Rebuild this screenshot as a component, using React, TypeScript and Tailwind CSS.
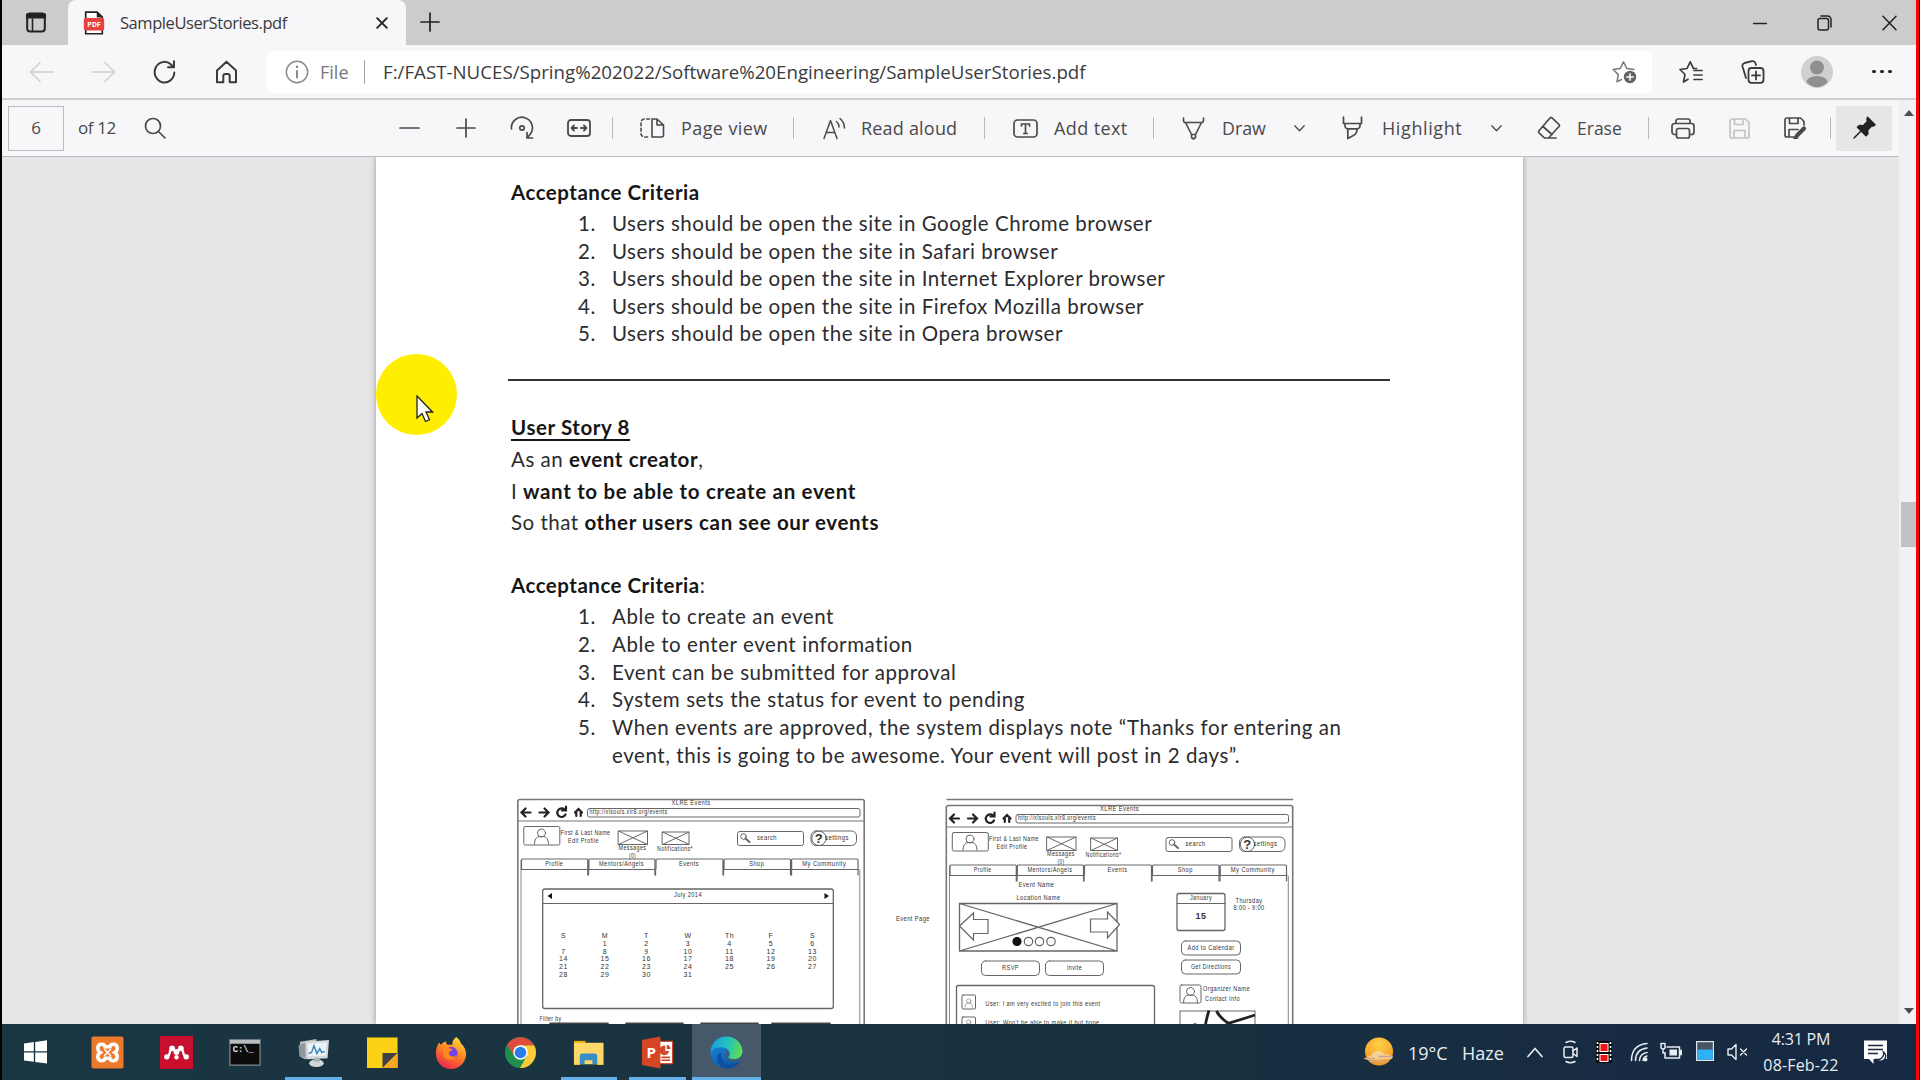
import type { ReactNode } from "react";

/* ---------- shared helpers ---------- */

function Ico({ w, h, className = "", sw = 1.6, children }: { w: number; h: number; className?: string; sw?: number; children: ReactNode }) {
  return (
    <svg
      width={w}
      height={h}
      viewBox={`0 0 ${w} ${h}`}
      className={`shrink-0 ${className}`}
      fill="none"
      stroke="currentColor"
      strokeWidth={sw}
      strokeLinecap="round"
      strokeLinejoin="round"
    >
      {children}
    </svg>
  );
}

function Sep({ className = "" }: { className?: string }) {
  return <div className={`h-[22px] w-px shrink-0 bg-[#b9b8bb] ${className}`} />;
}

/* ---------- browser chrome ---------- */

function TabBar() {
  return (
    <div className="flex h-[45px] shrink-0 bg-[#cccccc]">
      <div className="flex w-[66px] items-center rounded-br-md pl-[24px]">
        <Ico w={20} h={21} sw={2} className="text-[#222]">
          <rect x="1.2" y="1.5" width="17.6" height="18" rx="3" />
          <path d="M1.5 4h17" strokeWidth="5" />
          <path d="M6.5 7v12" strokeWidth="1.6" />
        </Ico>
      </div>
      <div className="flex w-[338px] items-center rounded-t-lg bg-[#f7f6f9] pl-[15px]">
        <svg width="22" height="24" viewBox="0 0 22 26" className="shrink-0">
          <path d="M2 1.2h12.5L20 6.5V24.6H2z" fill="#fff" stroke="#222" strokeWidth="1.8" />
          <path d="M14 1v6h6z" fill="#222" />
          <rect x="0" y="7.5" width="22" height="13.5" rx="2" fill="#e8403f" />
          <text x="11" y="17.3" textAnchor="middle" fontSize="7.6" fontWeight="700" fill="#fff" fontFamily="Open Sans, sans-serif">PDF</text>
        </svg>
        <span className="ml-[15px] w-[256px] text-[16.5px] leading-6 tracking-[-0.43px] whitespace-nowrap text-[#3a3a3c]">SampleUserStories.pdf</span>
        <Ico w={12} h={12} sw={1.9} className="text-[#222]">
          <path d="M1.2 1.2l9.6 9.6M10.8 1.2l-9.6 9.6" />
        </Ico>
      </div>
      <div className="flex items-center pl-[14px]">
        <Ico w={20} h={20} sw={1.7} className="-mt-[2px] text-[#222]">
          <path d="M10 1v18M1 10h18" />
        </Ico>
      </div>
      <div className="ml-auto flex items-center pr-[19px] text-[#222]">
        <Ico w={14} h={14} sw={1.6} className="mr-[50px]">
          <path d="M0.5 7.5h13" />
        </Ico>
        <Ico w={15} h={16} sw={1.5} className="mr-[50px]">
          <rect x="1" y="3.6" width="10.5" height="11.4" rx="2" />
          <path d="M4 1h6.5a3.5 3.5 0 0 1 3.5 3.5V12" />
        </Ico>
        <Ico w={15} h={16} sw={1.5}>
          <path d="M1 1.2l13 13.6M14 1.2L1 14.8" />
        </Ico>
      </div>
    </div>
  );
}

function AddressRow() {
  return (
    <div className="flex h-[53px] shrink-0 items-center bg-[#f7f6f9] pl-[27px] text-[#3b3b3d]">
      <Ico w={25} h={22} sw={1.5} className="text-[#d0cfd2]">
        <path d="M24 11H1.5M11 1.5L1.5 11l9.5 9.5" />
      </Ico>
      <Ico w={25} h={22} sw={1.5} className="ml-[37px] text-[#d0cfd2]">
        <path d="M1 11h22.5M14 1.5l9.500 9.500-9.500 9.500" />
      </Ico>
      <Ico w={23} h={24} sw={2} className="ml-[37px]">
        <path d="M21.300 12.500a9.800 10.300 0 1 1-3.600-8.300l3 3M21 1.300v6h-6" />
      </Ico>
      <Ico w={23} h={24} sw={2} className="ml-[39px]">
        <path d="M2 10.500L11.500 1.800 21 10.500V22.300H14.700V16a2 2 0 0 0-2-2h-2.400a2 2 0 0 0-2 2v6.300H2z" />
      </Ico>
      <div className="ml-[28px] flex h-[42px] w-[1386px] items-center rounded-md bg-white pl-[19px]">
        <Ico w={24} h={24} sw={1.5} className="text-[#8a898c]">
          <circle cx="12" cy="12" r="10.700" />
          <path d="M12 11v6.500" strokeWidth="2" />
          <path d="M12 6.800v.3" strokeWidth="2.400" />
        </Ico>
        <span className="ml-[11px] w-[44px] text-[18px] leading-6 text-[#77767a]">File</span>
        <div className="h-[24px] w-px bg-[#a5a4a8]" />
        <span className="ml-[18px] text-[18.700px] leading-6 tracking-[0.010px] whitespace-nowrap text-[#3b3b3d]">F:/FAST-NUCES/Spring%202022/Software%20Engineering/SampleUserStories.pdf</span>
        <Ico w={25} h={24} sw={1.500} className="mr-[15px] ml-auto text-[#77767a]">
          <path d="M9.500 19.500L5 21.800l1.300-7.200L1.200 9.500l7-1L11.500 1.800l3.300 6.700 7.200 1" />
          <circle cx="18" cy="17" r="6.200" fill="#626165" stroke="none" />
          <path d="M18 13.800v6.400M14.800 17h6.400" stroke="#fff" strokeWidth="1.500" />
        </Ico>
      </div>
      <Ico w={24} h={24} sw={1.700} className="ml-[27px]">
        <path d="M9 19.300L4.500 22l1.500-7.500-5-5 7-1L11.200 1.800l3.300 6.700h3M15 10.500h8M15 15h8M15 19.500h8" />
      </Ico>
      <Ico w={24} h={24} sw={1.800} className="ml-[38px]">
        <path d="M5 18L1.500 6.500A3 3 0 0 1 3.500 3L11 1.200a3 3 0 0 1 3.500 2L15 5" />
        <rect x="7.500" y="8" width="15" height="14.800" rx="3" />
        <path d="M15 11.500v8M11 15.400h8" />
      </Ico>
      <svg width="32" height="32" viewBox="0 0 32 32" className="ml-[36px] shrink-0">
        <circle cx="16" cy="16" r="16" fill="#d2d0ce" />
        <ellipse cx="16" cy="11.500" rx="7" ry="7" fill="#918f8d" />
        <path d="M5.500 26a10.500 6 0 0 1 21 0A14 14 0 0 1 16 31.200 14 14 0 0 1 5.500 26z" fill="#918f8d" />
      </svg>
      <div className="ml-[39px] flex gap-[4.500px]">
        <div className="size-[3.500px] rounded-full bg-[#222]" />
        <div className="size-[3.500px] rounded-full bg-[#222]" />
        <div className="size-[3.500px] rounded-full bg-[#222]" />
      </div>
    </div>
  );
}

function Chevron({ className = "" }: { className?: string }) {
  return (
    <Ico w={11} h={7} sw={1.300} className={className}>
      <path d="M0.800 0.800l4.700 5 4.700-5" />
    </Ico>
  );
}

function PdfToolbar() {
  return (
    <div className="flex h-[57px] shrink-0 items-center border-b border-[#bdbcc0] bg-[#f7f6f9] pl-[6px] text-[18px] leading-6 whitespace-nowrap text-[#4a494c]">
      <div className="flex h-[45px] w-[56px] items-center justify-center border border-[#bdbcc0] text-[17px]">6</div>
      <span className="ml-[14px] w-[66px] text-[17px] tracking-[-0.400px]">of 12</span>
      <Ico w={22} h={22} sw={1.700} className="-mt-px">
        <circle cx="9" cy="9" r="7.500" />
        <path d="M14.500 14.500l6.500 6.500" />
      </Ico>
      <Ico w={21} h={20} sw={1.700} className="ml-[233px]">
        <path d="M1 10h19" />
      </Ico>
      <Ico w={20} h={20} sw={1.700} className="ml-[36px]">
        <path d="M10 1v18M1 10h18" />
      </Ico>
      <Ico w={25} h={24} sw={1.700} className="ml-[34px]">
        <path d="M1.500 13A10.500 10.500 0 1 1 20 18.500l-2.500 3M17 16.500v5.500h5.500" />
        <circle cx="12" cy="12" r="2.200" />
      </Ico>
      <Ico w={24} h={18} sw={1.800} className="ml-[32px]">
        <rect x="1" y="1" width="22" height="16" rx="3" />
        <path d="M5 9h5M19 9h-5M7 6.500L4.500 9 7 11.500M17 6.500L19.500 9 17 11.500" />
      </Ico>
      <Sep className="ml-[21px]" />
      <Ico w={25} h={20} sw={1.600} className="ml-[27px]">
        <path d="M9.500 1H4.500A3.500 3.500 0 0 0 1 4.500v11A3.500 3.500 0 0 0 4.500 19h5" strokeDasharray="2.800 2.600" />
        <path d="M12 1h5l6.500 6v10a2 2 0 0 1-2 2H12zM17 1v6h6.500" />
      </Ico>
      <span className="ml-[16px] w-[87px] tracking-[0.400px]">Page view</span>
      <Sep className="ml-[25px]" />
      <Ico w={23} h={23} sw={1.500} className="ml-[29px]">
        <path d="M1 21.500L7.500 3.500 14 21.500M3.300 15.500h8.500" />
        <path d="M13.500 4.500q2.500 2 2.500 5.500M17 1.500q4.500 4 4.500 9.500" />
      </Ico>
      <span className="ml-[15px] w-[97px] tracking-[0.200px]">Read aloud</span>
      <Sep className="ml-[26px]" />
      <Ico w={25} h={19} sw={1.700} className="ml-[28px]">
        <rect x="1" y="1" width="23" height="17" rx="3.500" />
        <path d="M8.500 7V5h8v2M12.500 5v9.500M10.800 14.500h3.400" />
      </Ico>
      <span className="ml-[16px] w-[74px] tracking-[0.400px]">Add text</span>
      <Sep className="ml-[25px]" />
      <Ico w={23} h={23} sw={1.600} className="ml-[28px]">
        <path d="M1.500 1v3l1 1.500h18l1-1.500V1M3.500 5.500L9.500 17.500v3l2 1.500 2-1.500v-3L19.500 5.500M9.500 17.500h4" />
      </Ico>
      <span className="ml-[17px] w-[72px] text-[17.800px]">Draw</span>
      <Chevron className="mt-px" />
      <Ico w={21} h={24} sw={1.700} className="ml-[37px]">
        <path d="M1.500 1v6.500h18V1M3 7.500v2.500a3 3 0 0 0 2 2.800h11a3 3 0 0 0 2-2.800V7.500M5.800 13v9.500l6-3.200q3.200-1.800 3.200-6.300" />
      </Ico>
      <span className="ml-[19px] w-[109px] tracking-[0.600px]">Highlight</span>
      <Chevron className="mt-px" />
      <Ico w={24} h={24} sw={1.700} className="ml-[35px]">
        <path d="M14.800 1.700L22 8.500a1.500 1.500 0 0 1 0 2L11.500 22H7.500L2 16.800a1.500 1.500 0 0 1 0-2L13 2a1.300 1.300 0 0 1 1.800-.3zM6 10.500l9 8M7.500 22h11.500" />
      </Ico>
      <span className="ml-[16px] w-[52px] text-[17.500px]">Erase</span>
      <Sep className="ml-[19px]" />
      <Ico w={24} h={21} sw={1.700} className="ml-[22px]">
        <path d="M5 5.500V3a2 2 0 0 1 2-2h10a2 2 0 0 1 2 2v2.500M5 16.500H3.500A2.500 2.500 0 0 1 1 14V8a2.500 2.500 0 0 1 2.500-2.500h17A2.500 2.500 0 0 1 23 8v6a2.500 2.500 0 0 1-2.500 2.500H19" />
        <rect x="5.500" y="10.500" width="13" height="9.500" rx="2" />
      </Ico>
      <Ico w={21} h={21} sw={1.700} className="ml-[34px] text-[#c4c3c6]">
        <path d="M1 3a2 2 0 0 1 2-2h13.500L20 4.500V18a2 2 0 0 1-2 2H3a2 2 0 0 1-2-2zM5.500 1v5.500H14V1M5 20v-7.500h11V20" />
      </Ico>
      <Ico w={23} h={22} sw={1.700} className="ml-[34px]">
        <path d="M10 20H3a2 2 0 0 1-2-2V3a2 2 0 0 1 2-2h13.500L20 4.500V8M5.500 1v5.500H14V1M5 20v-7.500h9" />
        <path d="M20 11.500l-7 7" strokeWidth="4.200" />
        <path d="M11.500 19l-1.500 2.500 3.500-.5z" fill="currentColor" />
      </Ico>
      <Sep className="ml-[23px]" />
      <div className="ml-[5px] flex h-[45px] w-[56px] items-center justify-center bg-[#e6e5e7] text-[#222]">
        <Ico w={23} h={23} sw={1.500} className="-mt-[2px]">
          <path d="M14.500 1.200l7.500 7.500-1.500 1.300-1.800-.2-4 4.200.1 4-1.800 1.800L4.500 11.300l1.800-1.800 4 .2 4-4.200-.3-2z" fill="currentColor" />
          <path d="M8.500 14.500L1 22" />
        </Ico>
      </div>
    </div>
  );
}

/* ---------- wireframe figure inside the document ---------- */

function T({ x, y, w, s = 7, b = false, start = false, children }: { x: number; y: number; w?: number; s?: number; b?: boolean; start?: boolean; children: string }) {
  return (
    <text
      x={x}
      y={y}
      fontSize={s}
      fontWeight={b ? 700 : 400}
      textAnchor={start ? "start" : "middle"}
      textLength={w}
      lengthAdjust="spacingAndGlyphs"
      fill="#333"
      stroke="none"
      fontFamily="Liberation Sans, Arial, sans-serif"
    >
      {children}
    </text>
  );
}

function Person({ x, y, s = 1 }: { x: number; y: number; s?: number }) {
  return (
    <g transform={`translate(${x} ${y}) scale(${s})`} strokeWidth={1}>
      <circle cx="0" cy="-3.500" r="4" />
      <path d="M-7 7.500q0-7 5-7.500h4q5 .5 5 7.500" />
    </g>
  );
}

function MockHeader() {
  const tabs = [521, 588.3, 655.5, 723.500, 791, 858.500];
  const names: [string, number][] = [["Profile", 18], ["Mentors/Angels", 45], ["Events", 20], ["Shop", 15], ["My Community", 44]];
  return (
    <g>
      <rect x="517.800" y="799.500" width="346.400" height="240" rx="2" stroke="#777" strokeWidth="1.600" />
      <path d="M521 860v180M859.800 870v160" stroke="#888" />
      <path d="M518 821h346" stroke="#777" strokeWidth="1.200" />
      <T x={691} y={805.3} w={39}>XLRE Events</T>
      <g stroke="#222" strokeWidth="2.200">
        <path d="M530.500 812.500h-9M525.500 808.500l-4 4 4 4M539.500 812.500h9M544.500 808.500l4 4-4 4" />
        <path d="M565.500 814.500a4.300 4.300 0 1 1-1-5M566 806.500v4h-4" />
        <path d="M575 812.500l3.500-3.500 3.500 3.500M576.300 812.500v3.500M580.700 812.500v3.500" />
      </g>
      <rect x="587.500" y="808.500" width="272.500" height="8.500" rx="2" />
      <T x={589.500} y={814} w={78} s={7} start>http://xlsouls.xlr8.org/events</T>
      <rect x="523.800" y="826.500" width="36" height="18.500" rx="1.500" />
      <Person x={541.500} y={836.500} />
      <T x={585.500} y={834.800} w={50}>First &amp; Last Name</T>
      <T x={583.500} y={842.500} w={31}>Edit Profile</T>
      <path d="M618.500 831h29v13.500h-29zl29 13.500M647.500 831l-29 13.500" />
      <T x={632.500} y={849.500} w={28}>Messages</T>
      <T x={632.500} y={857.500} w={7}>(0)</T>
      <path d="M662.500 832h26.500v12.500h-26.500zl26.500 12.500M689 832l-26.500 12.500" />
      <T x={675} y={851.300} w={36}>Notifications*</T>
      <rect x="737.500" y="831.500" width="66" height="14" rx="2" />
      <circle cx="743.500" cy="836.500" r="2.800" />
      <path d="M745.500 838.500l4 3.500" strokeWidth="2" />
      <T x={767} y={840} w={20}>search</T>
      <rect x="811" y="831" width="45.500" height="14.500" rx="5" />
      <circle cx="819" cy="838.300" r="7.200" />
      <T x={819} y={843} s={13} b>?</T>
      <T x={837} y={840} w={24}>settings</T>
      {names.map(([n, w], i) => (
        <g key={n}>
          <path d={`M${tabs[i] + 0.500} 869V860q0-1 1-1H${tabs[i + 1] - 1.500}q1 0 1 1v15`} strokeWidth="1.200" />
          {i !== 2 && <path d={`M${tabs[i]} 869.500H${tabs[i + 1]}`} />}
          <T x={(tabs[i] + tabs[i + 1]) / 2 - 0.500} y={866} w={w}>{n}</T>
        </g>
      ))}
      <path d="M655.500 869v6M588.500 861v14M723.500 861v14M791.500 861v14" strokeWidth="1.300" />
    </g>
  );
}

const calendarRows = [
  ["S", "M", "T", "W", "Th", "F", "S"],
  ["", "1", "2", "3", "4", "5", "6"],
  ["7", "8", "9", "10", "11", "12", "13"],
  ["14", "15", "16", "17", "18", "19", "20"],
  ["21", "22", "23", "24", "25", "26", "27"],
  ["28", "29", "30", "31", "", "", ""],
];

function Figure() {
  return (
    <svg viewBox="510 790 800 234" width="800" height="234" className="absolute bottom-0 left-[134px]" fill="none" stroke="#666" strokeWidth="1" strokeLinecap="round">
      <MockHeader />
      <rect x="542.700" y="889" width="290.600" height="119.500" rx="2" strokeWidth="1.300" />
      <path d="M543 903.500h290" />
      <path d="M552 893v6l-4.500-3zM824.500 893v6l4.500-3z" fill="#111" stroke="none" />
      <T x={688} y={897.300} w={28}>July 2014</T>
      {calendarRows.map((r, i) =>
        r.map((d, j) => d && <T key={`${i}-${j}`} x={563.500 + j * 41.500} y={938 + i * 7.800}>{d}</T>)
      )}
      <T x={550.500} y={1020.500} w={22}>Filter by</T>
      <path d="M550 1023.300h58M626 1023.300h57M701 1023.300h57M772 1023.300h58" strokeWidth="1.600" stroke="#444" />
      <T x={913} y={921} w={34}>Event Page</T>

      <path d="M947 799.500h345.500" stroke="#777" strokeWidth="1.500" />
      <g transform="translate(428.500 6)">
        <MockHeader />
      </g>
      <T x={1036.500} y={887.300} w={36}>Event Name</T>
      <T x={1038.500} y={899.500} w={44}>Location Name</T>
      <path d="M959.500 903.500h157.500v47.500H959.500zl157.500 47.500M1117 903.500L959.500 951" strokeWidth="1.300" />
      <g fill="#fff" strokeWidth="1.200">
        <path d="M959.500 926l14-13v6.500h14.500v14h-14.500v6.500zM1119.500 924.500l-12-12.500v7h-17v13h17v6z" />
        <circle cx="1017" cy="941.500" r="4" fill="#111" stroke="#111" />
        <circle cx="1028.500" cy="941.500" r="4.200" />
        <circle cx="1039.500" cy="941.500" r="4.200" />
        <circle cx="1051" cy="941.500" r="4.200" />
      </g>
      <rect x="981.500" y="961" width="58" height="14.500" rx="4" />
      <T x={1010.500} y={969.500} w={17}>RSVP</T>
      <rect x="1045.500" y="961" width="58" height="14.500" rx="4" />
      <T x={1074.500} y={969.500} w={15}>Invite</T>
      <rect x="956.500" y="985.500" width="198" height="60" rx="2" strokeWidth="1.300" />
      <rect x="962" y="995" width="13.500" height="14" rx="1" />
      <Person x={968.700} y={1003} s={0.550} />
      <T x={985.500} y={1006} w={115} start>User: I am very excited to join this event</T>
      <rect x="962" y="1017" width="13.500" height="14" rx="1" />
      <Person x={968.700} y={1024} s={0.550} />
      <T x={985.500} y={1024.500} w={114} start>User: Won&apos;t be able to make it but hope</T>
      <rect x="1177" y="893.500" width="48" height="37" rx="2" strokeWidth="1.300" />
      <path d="M1177 903.500h48" />
      <T x={1201} y={900} w={22}>January</T>
      <T x={1201} y={918.800} s={9} w={11} b>15</T>
      <T x={1249} y={902.500} w={27}>Thursday</T>
      <T x={1249} y={910} w={31}>8:00 - 9:00</T>
      <rect x="1181.500" y="941" width="59" height="14" rx="4" />
      <T x={1211} y={949.500} w={47}>Add to Calendar</T>
      <rect x="1181.500" y="960" width="59" height="14" rx="4" />
      <T x={1211} y={968.500} w={40}>Get Directions</T>
      <rect x="1180" y="985" width="21" height="18" rx="1.500" />
      <Person x={1190.500} y={995} />
      <T x={1226.500} y={991} w={47}>Organizer Name</T>
      <T x={1222.500} y={1001} w={35}>Contact Info</T>
      <rect x="1180" y="1011" width="75" height="30" />
      <path d="M1209 1010.500q-2 6-3.500 14M1216.500 1011q4 8 14 13.500M1226 1024q14-4 29-9" stroke="#222" strokeWidth="2.800" strokeLinecap="butt" />
      <circle cx="1195" cy="1026" r="2.500" />
    </svg>
  );
}

/* ---------- document ---------- */

function OrderedList({ items }: { items: ReactNode[] }) {
  return (
    <ol>
      {items.map((t, i) => (
        <li key={i} className="flex">
          <span className="w-[101px] pl-[67px]">{i + 1}.</span>
          <span>{t}</span>
        </li>
      ))}
    </ol>
  );
}

function Page() {
  return (
    <div className="relative h-full w-[1147px] bg-white pt-[22px] pl-[135px] font-[Lato,sans-serif] text-[20.500px] leading-[27.500px] tracking-[0.520px] whitespace-nowrap text-[#2c2c2e] shadow-[0_0_5px_1px_rgba(0,0,0,0.25)]">
      <h2 className="font-bold tracking-[0.500px] text-[#161616]">Acceptance Criteria</h2>
      <div className="pt-[3.500px]">
        <OrderedList
          items={[
            "Users should be open the site in Google Chrome browser",
            "Users should be open the site in Safari browser",
            "Users should be open the site in Internet Explorer browser",
            "Users should be open the site in Firefox Mozilla browser",
            "Users should be open the site in Opera browser",
          ]}
        />
      </div>
      <div className="mt-[31.500px] -ml-[3px] h-[1.500px] w-[882px] bg-[#333]" />
      <h2 className="mt-[33px] font-bold tracking-[0.600px] text-[#161616] underline decoration-2 underline-offset-4">User Story 8</h2>
      <div className="mt-[3px] leading-[31.600px] tracking-[0.500px]">
        <p>As an <b className="tracking-[0.600px] text-[#161616]">event creator</b>,</p>
        <p>I <b className="tracking-[0.680px] text-[#161616]">want to be able to create an event</b></p>
        <p>So that <b className="tracking-[0.640px] text-[#161616]">other users can see our events</b></p>
      </div>
      <h2 className="mt-[33px] tracking-[0.500px]"><b className="text-[#161616]">Acceptance Criteria</b>:</h2>
      <div className="pt-[4px] leading-[27.700px] tracking-[0.580px]">
        <OrderedList
          items={[
            "Able to create an event",
            "Able to enter event information",
            "Event can be submitted for approval",
            "System sets the status for event to pending",
            <>When events are approved, the system displays note “Thanks for entering an<br />event, this is going to be awesome. Your event will post in 2 days”.</>,
          ]}
        />
      </div>
      <Figure />
    </div>
  );
}

function Triangle({ up = false, className = "" }: { up?: boolean; className?: string }) {
  return (
    <svg width="10" height="6" viewBox="0 0 10 6" className={`shrink-0 ${className}`}>
      <path d={up ? "M0 6L5 0l5 6z" : "M0 0l5 6 5-6z"} fill="#4d4c50" />
    </svg>
  );
}

function Scrollbar() {
  return (
    <div className="flex w-[17px] flex-col items-center bg-[#f1f0f3]">
      <Triangle className="mt-[10px] ml-[3px]" up />
      <div className="mt-[386px] ml-[2px] h-[45px] w-[15px] bg-[#c1c0c2]" />
      <Triangle className="mt-auto mb-[10px] ml-[3px]" />
    </div>
  );
}

function Pointer() {
  return (
    <div className="absolute top-[354px] left-[376px] size-[81px] rounded-full bg-[#ffee00]">
      <svg width="18" height="28" viewBox="0 0 18 28" className="absolute top-[41px] left-[40px]">
        <path d="M1 1v22l5-4.500 3.500 8 4-1.800-3.500-7.700h6.500z" fill="#fff" stroke="#222" strokeWidth="1.300" />
      </svg>
    </div>
  );
}

/* ---------- taskbar ---------- */

function App32({ children }: { children: ReactNode }) {
  return (
    <svg width="33" height="33" viewBox="0 0 34 34">
      {children}
    </svg>
  );
}

const XamppIcon = (
  <App32>
    <rect x="0.500" y="0.500" width="33" height="33" rx="2" fill="#ec7a2c" />
    <path d="M11 8.500q3 0 3.500 2.500h5q.5-2.500 3.500-2.500 4 0 4 4 0 3-2.500 4.500 2.500 1.500 2.500 4.500 0 4-4 4-3 0-3.500-2.500h-5q-.5 2.500-3.500 2.500-4 0-4-4 0-3 2.500-4.500-2.500-1.500-2.500-4.500 0-4 4-4z" fill="none" stroke="#fff" strokeWidth="3.600" />
    <path d="M13.500 13.500l7 7M20.500 13.500l-7 7" stroke="#fff" strokeWidth="1.500" />
  </App32>
);

const MendeleyIcon = (
  <App32>
    <rect width="34" height="34" fill="#c8102e" />
    <g fill="#fff">
      <circle cx="12.500" cy="12.800" r="3" />
      <circle cx="21.500" cy="12.800" r="3" />
      <circle cx="17" cy="16.500" r="3" />
      <circle cx="7" cy="21.500" r="2.800" />
      <circle cx="27" cy="21.500" r="2.800" />
      <circle cx="17" cy="21.800" r="2.300" />
    </g>
    <path d="M7 21.500q3-1 3.500-7M27 21.500q-3-1-3.500-7" stroke="#fff" strokeWidth="2.400" fill="none" />
  </App32>
);

const TerminalIcon = (
  <App32>
    <rect x="2" y="4" width="31" height="26" fill="#0b0b0b" stroke="#8b8f93" strokeWidth="1.200" />
    <rect x="2" y="4" width="31" height="4" fill="#b7bcc0" />
    <text x="5" y="16.500" fontSize="9" fontWeight="700" fill="#e5e5e5" fontFamily="Liberation Mono, monospace">C:\_</text>
  </App32>
);

const MonitorIcon = (
  <App32>
    <path d="M3 6l17-3v17l-12 4-5-3z" fill="#b9bec3" />
    <path d="M1.500 9.500l7-2v15l-6-1.500z" fill="#8f969c" />
    <path d="M9 6l24-2-1.500 19L10 24z" fill="#d6d9dc" />
    <path d="M11 8l19.500-1.500-1.200 13.500L11.500 21z" fill="#eef5fa" />
    <path d="M12 18l3-1 2.500-7 3 8 3-5 2 4 3-1" fill="none" stroke="#3c87b5" strokeWidth="1.500" />
    <ellipse cx="20" cy="28" rx="7.500" ry="4" fill="#d3d6d9" />
    <rect x="17.500" y="22.500" width="6" height="4" fill="#a9aeb3" />
  </App32>
);

const StickyIcon = (
  <App32>
    <path d="M1 1.500h31.500v31.500H1z" fill="#fcd116" />
    <path d="M17 17.500h15.500L17 33z" fill="#3f4144" />
    <path d="M32.500 17.500V33H17z" fill="#f5a623" />
  </App32>
);

const FirefoxIcon = (
  <App32>
    <defs>
      <linearGradient id="ffx" x1="0.800" y1="0" x2="0.300" y2="1">
        <stop offset="0" stopColor="#ffe14a" />
        <stop offset="0.450" stopColor="#ff8a1e" />
        <stop offset="1" stopColor="#f0244f" />
      </linearGradient>
    </defs>
    <path d="M22 1q4 3 5 7 4.500 4 5 10a15.500 15.500 0 0 1-31 1Q.500 12 4.500 6.500q.5 2 1.500 2.500 3-3 5.500-3.500Q11 8 13 9h5q-1-4 4-8z" fill="url(#ffx)" />
    <circle cx="17" cy="17.500" r="6.300" fill="#7542e5" />
    <path d="M8 12q4-2 7 1 3 0 3 1.500l-3.500 2q-1 3.500 2.500 4.500 3 .5 5-1.500-2 5.500-7.500 5T8 18z" fill="#ff8a1e" />
  </App32>
);

const ChromeIcon = (
  <App32>
    <circle cx="17" cy="17" r="16" fill="#1f8f4d" />
    <path d="M17 9.500h14.100A16 16 0 0 1 16.500 33l7-12.500z" fill="#fbcb3a" />
    <path d="M3.200 9A16 16 0 0 1 30.900 9.500H17a7.500 7.500 0 0 0-7 10z" fill="#df4b3c" />
    <circle cx="17" cy="17" r="7.500" fill="#fff" />
    <circle cx="17" cy="17" r="6" fill="#2a7de9" />
  </App32>
);

const ExplorerIcon = (
  <App32>
    <path d="M2 5h12v4H2z" fill="#f0ab00" />
    <rect x="2" y="7" width="30.500" height="22" rx="1" fill="#ffd869" />
    <path d="M8 29v-8.500a2.500 2.500 0 0 1 2.500-2.500h13a2.500 2.500 0 0 1 2.500 2.500V29h-5v-4h-8v4z" fill="#3a8ec6" />
    <path d="M2 29h6M26 29h6.500" stroke="#f5c542" strokeWidth="1.500" />
  </App32>
);

const PowerPointIcon = (
  <App32>
    <rect x="16" y="5.500" width="16.500" height="23" fill="#fff" stroke="#d24726" strokeWidth="1.200" />
    <path d="M25 10a5 5 0 1 0 4 5.500h-4z" fill="#d24726" />
    <path d="M26.500 9a5 5 0 0 1 4 4.500h-4z" fill="#d24726" />
    <path d="M21 22h9M21 25h9" stroke="#d24726" strokeWidth="1.600" />
    <path d="M1 4l19-3.500v33L1 30z" fill="#d64526" />
    <text x="10.500" y="22.500" textAnchor="middle" fontSize="15.500" fontWeight="700" fill="#fff" fontFamily="Open Sans, sans-serif">P</text>
  </App32>
);

const EdgeIcon = (
  <App32>
    <defs>
      <linearGradient id="edgeTop" x1="0" y1="0.300" x2="1" y2="0.500">
        <stop offset="0" stopColor="#1b9de2" />
        <stop offset="0.550" stopColor="#25c4b8" />
        <stop offset="1" stopColor="#5fdc4e" />
      </linearGradient>
      <linearGradient id="edgeLow" x1="0" y1="0" x2="0.600" y2="1">
        <stop offset="0" stopColor="#1c8ee0" />
        <stop offset="1" stopColor="#0b57ad" />
      </linearGradient>
    </defs>
    <circle cx="17" cy="17" r="16.500" fill="url(#edgeLow)" />
    <path d="M.6 16A16.500 16.500 0 0 1 33.500 15.500q0 7.500-8 8.500-6.500.3-7-2 2.500-2 1.500-5.500-2-5-8.500-5-7 0-10.900 4.500z" fill="url(#edgeTop)" />
    <path d="M11.500 17q-1 8 5.500 11.500 6 2.500 14-2-5 7-14 7Q8 32 7.500 23.500 7.500 19 11.500 17z" fill="#0c4f9e" />
    <path d="M17 14.500q3.500 2 1.500 7.500 2 2.300 7 2 5-.3 7-3-.6 2.800-1.700 4.500-6.800 2.500-11.800-.5-4.500-4-2-10.500z" fill="#44596a" />
  </App32>
);

type TaskState = "idle" | "open" | "active";

const taskItems: { name: string; icon: ReactNode; state: TaskState }[] = [
  { name: "xampp", icon: XamppIcon, state: "idle" },
  { name: "mendeley", icon: MendeleyIcon, state: "idle" },
  { name: "terminal", icon: TerminalIcon, state: "idle" },
  { name: "monitor", icon: MonitorIcon, state: "open" },
  { name: "notes", icon: StickyIcon, state: "idle" },
  { name: "firefox", icon: FirefoxIcon, state: "idle" },
  { name: "chrome", icon: ChromeIcon, state: "idle" },
  { name: "explorer", icon: ExplorerIcon, state: "open" },
  { name: "powerpoint", icon: PowerPointIcon, state: "open" },
  { name: "edge", icon: EdgeIcon, state: "active" },
];

function TaskButton({ icon, state }: { icon: ReactNode; state: TaskState }) {
  return (
    <div className={`relative flex w-[68.800px] items-center justify-center ${state === "active" ? "bg-[#45596a]" : ""}`}>
      {icon}
      {state === "open" && <div className="absolute inset-x-[6px] bottom-0 h-[3px] bg-[#64b1ea]" />}
      {state === "active" && <div className="absolute inset-x-0 bottom-0 h-[3px] bg-[#64b1ea]" />}
    </div>
  );
}

function Tray() {
  return (
    <div className="ml-auto flex items-center pr-[28px] text-[#e8edf2]">
      <svg width="30" height="32" viewBox="0 0 30 32" className="shrink-0">
        <defs>
          <radialGradient id="sun" cx="0.500" cy="0.250" r="0.800">
            <stop offset="0" stopColor="#ffd24a" />
            <stop offset="1" stopColor="#f2901c" />
          </radialGradient>
        </defs>
        <circle cx="15" cy="15.500" r="14" fill="url(#sun)" />
        <path d="M2 24q1-4 5-4 2-5 7-5 4.500 0 6 3.500 3-1 5 .5 3.500 1 3.500 4z" fill="#f4d9b5" opacity="0.750" />
        <path d="M0 22.500h11M14 20.500h15M6 25.500h18" stroke="#c9a98a" strokeWidth="1.500" />
      </svg>
      <span className="mt-[2px] ml-[14px] w-[54px] text-[18px]">19°C</span>
      <span className="mt-[2px] w-[65px] text-[18px]">Haze</span>
      <Ico w={16} h={11} sw={1.700}>
        <path d="M1 9.500L8 1.500l7 8" />
      </Ico>
      <Ico w={15} h={24} sw={1.500} className="ml-[20px]">
        <rect x="1" y="7" width="9" height="10.500" rx="1.500" />
        <path d="M10 11l4-3v8.500l-4-3M3 2.500q4.500-2.500 9 0M3 21.500q4.500 2.500 9 0" />
      </Ico>
      <svg width="16" height="22" viewBox="0 0 16 22" className="ml-[18px]">
        <rect width="16" height="22" fill="#0a0a0a" />
        <path d="M1.500 1v20M14.500 1v20" stroke="#fff" strokeWidth="1.600" strokeDasharray="2 2" />
        <rect x="4" y="2.500" width="8" height="8" fill="#f01414" stroke="#fff" strokeWidth="1" />
        <rect x="4" y="13.500" width="8" height="7" fill="#f01414" stroke="#fff" strokeWidth="1" />
      </svg>
      <Ico w={18} h={20} sw={1.500} className="ml-[18px]">
        <path d="M1.500 18.500Q1.500 3 17 1.500M5.500 18.500Q5.500 7.500 17 6M9.500 18.500q.5-7 7.500-8M13 18.500q.5-3.500 4-4.500" />
        <circle cx="15.500" cy="17.500" r="1.300" fill="currentColor" />
      </Ico>
      <Ico w={24} h={18} sw={1.500} className="-mt-[2px] ml-[11px]">
        <path d="M8 5h12.500v11H6v-5" />
        <path d="M22 8.500v4" strokeWidth="2" />
        <rect x="10.500" y="7.500" width="7.500" height="6" fill="currentColor" stroke="none" />
        <path d="M2 1.500v3.500q0 2 2 2t2-2V1.500zM4 7v4h2" />
      </Ico>
      <svg width="18" height="20" viewBox="0 0 18 20" className="-mt-[3px] ml-[13px]">
        <rect x="0.600" y="0.600" width="16.800" height="18.800" fill="#4a5362" stroke="#dfe5ea" strokeWidth="1.200" />
        <rect x="1.200" y="8.500" width="15.600" height="10.300" fill="#31b1f5" />
      </svg>
      <Ico w={21} h={18} sw={1.400} className="-mt-px ml-[13px]">
        <path d="M1 6h3.500L9 1.500v15L4.500 12H1zM13.500 6l6 6M19.500 6l-6 6" />
      </Ico>
      <div className="-mt-px ml-[15px] flex w-[76px] flex-col items-center text-[16px] leading-[26px] whitespace-nowrap">
        <span className="tracking-[-0.200px]">4:31 PM</span>
        <span className="tracking-[0.150px]">08-Feb-22</span>
      </div>
      <svg width="24" height="25" viewBox="0 0 24 25" className="mt-px ml-[25px]">
        <path d="M0 0.500h23v18.500H9.500V24L5 19H0z" fill="#fff" />
        <path d="M4 5.500h15M4 9.500h15M4 13.500h10" stroke="#172b45" strokeWidth="1.600" />
        <path d="M19.500 12a5 5 0 1 1-6.500 7.500 6 6 0 0 0 6.500-7.500z" fill="#fff" stroke="#172b45" strokeWidth="1.400" />
      </svg>
    </div>
  );
}

function Taskbar() {
  return (
    <div className="flex h-[56px] shrink-0 bg-linear-to-r from-[#1a3642] via-[#19323f] to-[#162843]">
      <div className="flex w-[71px] items-center pl-[22px]">
        <svg width="23" height="24" viewBox="0 0 23 24">
          <path d="M0 3.500l9.800-1.400v9.100H0zM11.200 1.900L23 .3v10.900H11.200zM0 12.600h9.800v9.200L0 20.400zM11.200 12.600H23v11L11.200 22z" fill="#fff" />
        </svg>
      </div>
      {taskItems.map((t) => (
        <TaskButton key={t.name} icon={t.icon} state={t.state} />
      ))}
      <Tray />
    </div>
  );
}

export default function App() {
  return (
    <div className="relative flex h-[1080px] w-[1920px] overflow-hidden bg-black pr-px pl-[2px] font-['Open_Sans',sans-serif]">
      <div className="flex min-w-0 flex-1 flex-col">
        <TabBar />
        <AddressRow />
        <div className="h-[2px] shrink-0 bg-[#cfced1]" />
        <div className="flex min-h-0 flex-1">
          <div className="flex min-w-0 flex-1 flex-col">
            <PdfToolbar />
            <div className="min-h-0 flex-1 overflow-hidden bg-[#e7e5e8] pl-[374px]">
              <Page />
            </div>
          </div>
          <Scrollbar />
        </div>
        <Taskbar />
      </div>
      <div className="w-[3px] shrink-0 bg-[#ff0000]" />
      <Pointer />
    </div>
  );
}
